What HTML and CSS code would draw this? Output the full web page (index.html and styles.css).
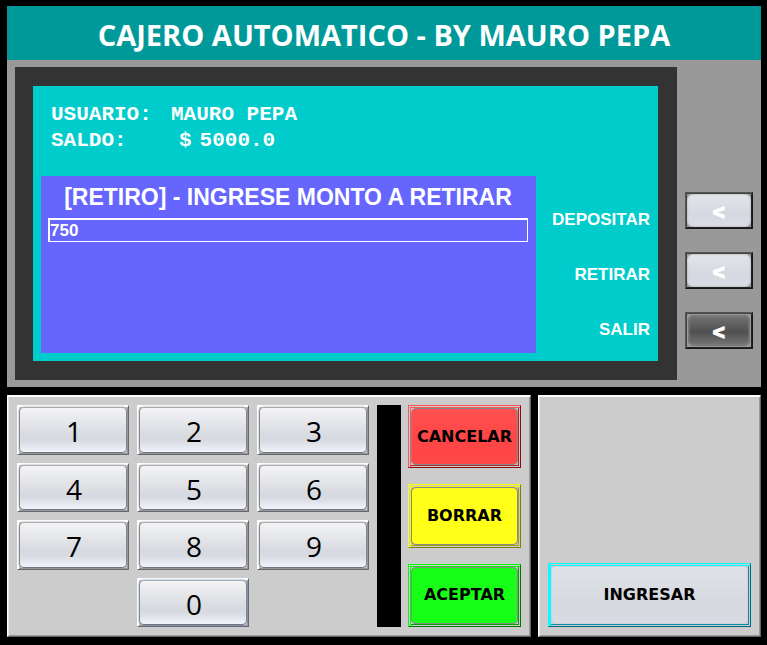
FILE: index.html
```html
<!DOCTYPE html>
<html lang="es">
<head>
<meta charset="utf-8">
<title>Cajero Automatico</title>
<link rel="stylesheet" href="styles.css">
</head>
<body>
<header class="header"><h1>CAJERO AUTOMATICO - BY MAURO PEPA</h1></header>
<main>
  <section class="machine">
    <div class="bezel">
      <div class="screen">
        <div class="content">
          <dl class="account">
            <dt>USUARIO:</dt><dd>MAURO PEPA</dd>
            <dt>SALDO:</dt><dd class="balance"><span>$</span><span>5000.0</span></dd>
          </dl>
          <div class="dialog">
            <label class="dialog-title" for="amount">[RETIRO] - INGRESE MONTO A RETIRAR</label>
            <input class="amount" id="amount" type="text" value="750">
          </div>
        </div>
        <div class="options">
          <label for="deposit">DEPOSITAR</label>
          <label for="withdraw">RETIRAR</label>
          <label for="exit">SALIR</label>
        </div>
      </div>
    </div>
    <div class="side">
      <button class="side-key" id="deposit" disabled><span>&lt;</span></button>
      <button class="side-key" id="withdraw" disabled><span>&lt;</span></button>
      <button class="side-key dark" id="exit"><span>&lt;</span></button>
    </div>
  </section>
  <div class="controls">
    <section class="panel keyboard">
      <div class="keys">
        <button class="key"><span>1</span></button>
        <button class="key"><span>2</span></button>
        <button class="key"><span>3</span></button>
        <button class="key"><span>4</span></button>
        <button class="key"><span>5</span></button>
        <button class="key"><span>6</span></button>
        <button class="key"><span>7</span></button>
        <button class="key"><span>8</span></button>
        <button class="key"><span>9</span></button>
        <button class="key zero"><span>0</span></button>
      </div>
      <div class="divider"></div>
      <div class="actions">
        <button class="action cancel"><span>CANCELAR</span></button>
        <button class="action erase"><span>BORRAR</span></button>
        <button class="action accept"><span>ACEPTAR</span></button>
      </div>
    </section>
    <section class="panel entry">
      <button class="action enter"><span>INGRESAR</span></button>
    </section>
  </div>
</main>
</body>
</html>
```
FILE: styles.css
```css
* { box-sizing: border-box; }

body {
  margin: 0;
  padding: 6px 6px 8px 7px;
  background: #000;
  font-family: "Liberation Sans", Arial, sans-serif;
}

button {
  margin: 0;
  font-family: inherit;
  color: #000;
  display: flex;
  background: #ccc;
}

button span {
  flex: 1;
  display: flex;
  align-items: center;
  justify-content: center;
}

.header {
  height: 54px;
  display: flex;
  align-items: center;
  justify-content: center;
  background: #099;
  color: #fff;
}

.header h1 {
  margin: 4px 0 0;
  font: bold 29px/36px "Open Sans", sans-serif;
}

.machine {
  display: flex;
  background: #999;
  padding: 7px 8px 7px 8px;
  gap: 8px;
}

.bezel {
  flex: 1;
  padding: 19px 19px 19px 18px;
  background: #333;
}

.screen {
  display: flex;
  padding: 0 8px 8px;
  background: #0cc;
  color: #fff;
}

.content { flex: 1; }

.account {
  display: grid;
  grid-template-columns: 120px 1fr;
  grid-auto-rows: 26px;
  height: 90px;
  margin: 0;
  padding: 16px 0 0 10px;
  font: bold 21px/26px "Liberation Mono", monospace;
}

.account dd { margin: 0; }

.balance {
  display: flex;
  gap: 8px;
  padding-left: 8px;
}

.dialog {
  height: 177px;
  padding: 8px 8px 8px 7px;
  background: #66f;
  text-align: center;
}

.dialog-title {
  display: block;
  margin-bottom: 8px;
  font-size: 23px;
  line-height: 26px;
  font-weight: bold;
}

.amount {
  display: block;
  width: 100%;
  height: 24px;
  padding: 0;
  border: solid #fff;
  border-width: 2px 1px 1px 2px;
  border-radius: 0;
  background: transparent;
  color: #fff;
  font: bold 17px/20px "Liberation Sans", sans-serif;
}

.options {
  width: 114px;
  display: flex;
  flex-direction: column;
  justify-content: flex-end;
  text-align: right;
  font-size: 17px;
  line-height: 55px;
  font-weight: bold;
  margin-bottom: -4px;
}

.side {
  width: 68px;
  display: flex;
  flex-direction: column;
  justify-content: flex-end;
  gap: 23px;
  padding-bottom: 31px;
}

.side-key {
  height: 37px;
  padding: 1px;
  border: 1px solid;
  border-color: #555 #181818 #181818 #555;
  box-shadow: inset 1px 1px #444, inset -1px -1px #222;
  background: #999;
  color: #fff;
  font: 900 22px/24px Inter, sans-serif;
}

.side-key span {
  border-radius: 6px;
  background: linear-gradient(#e2e5e9, #d5d8e0 60%, #dadde5);
  box-shadow: inset 0 0 2px #999;
}

.side-key.dark span {
  margin: 1px;
  border-radius: 5px;
  background: linear-gradient(#727272, #505050 55%, #747474);
  border: 1px solid #777;
}

.controls {
  display: grid;
  grid-template-columns: 524fr 223fr;
  gap: 7px;
  margin-top: 8px;
}

.panel {
  height: 242px;
  border: 1px solid;
  border-color: #fff #666 #666 #fff;
  box-shadow: inset 0 1px #fff, inset 1px 0 #e4e4e4, inset -1px -1px #999;
  background: #ccc;
}

.keyboard {
  display: grid;
  grid-template-columns: 1fr 24px 113px;
  column-gap: 7px;
  padding: 9px;
}

.entry {
  display: flex;
  flex-direction: column;
  justify-content: flex-end;
  padding: 9px;
}

.keys {
  display: grid;
  grid-template-columns: repeat(3, 1fr);
  grid-template-rows: repeat(4, 1fr);
  gap: 8px;
  padding-right: 1px;
}

.key {
  padding: 1px;
  border: 1px solid;
  border-color: #fff #66686c #66686c #fff;
  box-shadow: inset 1px 1px #fff, inset -1px -1px #999ba0;
  font: 28px/36px "Open Sans", sans-serif;
}

.key span {
  border: 1px solid;
  border-color: #aaacb0 #85878c #74767b #85878c;
  border-radius: 5px;
  background: linear-gradient(#f4f4f6, #d6d9df 65%, #d8dbe2 75%, #f2f4fc);
  box-shadow: 0 0 2px #888;
  padding: 3px 0 0 2px;
}

.zero { grid-column: 2; }

.zero span { box-shadow: 0 0 2px #4084c4; }

.divider { background: #000; }

.actions {
  display: grid;
  grid-template-rows: repeat(3, 1fr);
  gap: 16px;
}

.action {
  padding: 2px;
  border: 1px solid;
  font: bold 16px/20px "DejaVu Sans", sans-serif;
}

.action span {
  border: 1px solid #888;
  border-radius: 5px;
  box-shadow: 0 0 1px #888;
}

.cancel {
  border-color: #ff5555 #880c0c #880c0c #ff5555;
  box-shadow: inset 1px 1px #ccc, inset 2px 2px #ff5555, inset -1px -1px #ccc, inset -2px -2px #b02020;
}

.cancel span { background: linear-gradient(#ff5050, #ff4545 60%, #ff4848); }

.erase {
  border-color: #ff0 #808000 #808000 #ff0;
  box-shadow: inset 1px 1px #ccc, inset 2px 2px #ff0, inset -1px -1px #ccc, inset -2px -2px #aaa800;
}

.erase span { background: #ffff17; }

.accept {
  border-color: #0f0 #007800 #007800 #0f0;
  box-shadow: inset 1px 1px #ccc, inset 2px 2px #0f0, inset -1px -1px #ccc, inset -2px -2px #00a000;
}

.accept span { background: #17ff17; }

.enter {
  width: 100%;
  height: 64px;
  border-color: #0ff #006880 #006880 #0ff;
  box-shadow: inset 1px 0 #0ff, inset 0 1px #ccc, inset 2px 2px #0ff, inset -1px -1px #ccc, inset -2px -2px #0090a8;
}

.enter span {
  border-color: #d0d3d8;
  background: linear-gradient(#dfe2e6, #d6d9df 60%, #d8dbe3);
  box-shadow: none;
}
```
